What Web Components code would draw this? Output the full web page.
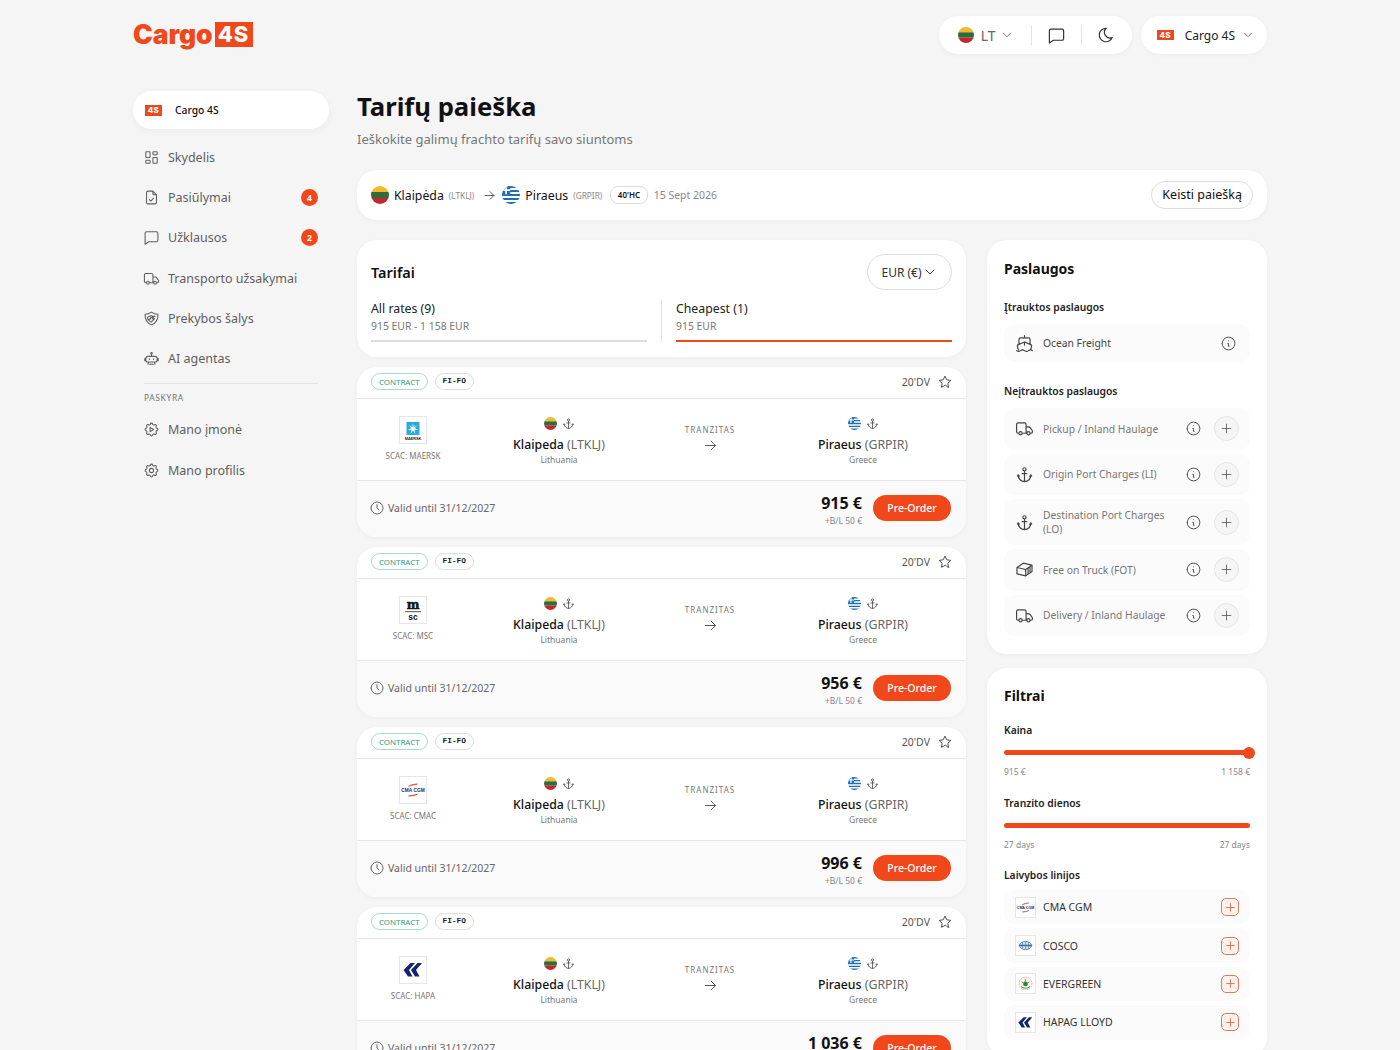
<!DOCTYPE html>
<html lang="lt">
<head>
<meta charset="utf-8">
<title>Cargo 4S</title>
<style>
  html, body { margin: 0; height: 1050px; overflow: hidden; background: #f5f5f5; }
  body { font-family: "Noto Sans", "Liberation Sans", sans-serif; color: #111; }
</style>
</head>
<body>
<app-page>
  <top-bar slot="header"></top-bar>
  <side-nav slot="side">
    <nav-item icon="dashboard" label="Skydelis"></nav-item>
    <nav-item icon="fileCheck" label="Pasiūlymai" badge="4"></nav-item>
    <nav-item icon="message" label="Užklausos" badge="2"></nav-item>
    <nav-item icon="truck" label="Transporto užsakymai"></nav-item>
    <nav-item icon="handshake" label="Prekybos šalys"></nav-item>
    <nav-item icon="robot" label="AI agentas"></nav-item>
    <nav-section label="PASKYRA"></nav-section>
    <nav-item icon="gearPlay" label="Mano įmonė"></nav-item>
    <nav-item icon="settings" label="Mano profilis"></nav-item>
  </side-nav>
  <page-title slot="title" heading="Tarifų paieška" sub="Ieškokite galimų frachto tarifų savo siuntoms"></page-title>
  <search-bar slot="title"></search-bar>
  <rates-tabs slot="rates"></rates-tabs>
  <rate-card slot="rates" logo="maersk" scac="MAERSK" price="915 €"></rate-card>
  <rate-card slot="rates" logo="msc" scac="MSC" price="956 €"></rate-card>
  <rate-card slot="rates" logo="cma" scac="CMAC" price="996 €"></rate-card>
  <rate-card slot="rates" logo="hapag" scac="HAPA" price="1 036 €"></rate-card>
  <services-panel slot="aside">
    <service-row icon="ship" label="Ocean Freight" included></service-row>
    <service-row slot="extra" icon="truck" label="Pickup / Inland Haulage"></service-row>
    <service-row slot="extra" icon="anchor" label="Origin Port Charges (LI)"></service-row>
    <service-row slot="extra" icon="anchor" label="Destination Port Charges (LO)"></service-row>
    <service-row slot="extra" icon="container" label="Free on Truck (FOT)"></service-row>
    <service-row slot="extra" icon="truck" label="Delivery / Inland Haulage"></service-row>
  </services-panel>
  <filters-panel slot="aside">
    <carrier-row logo="cma" label="CMA CGM"></carrier-row>
    <carrier-row logo="cosco" label="COSCO"></carrier-row>
    <carrier-row logo="evergreen" label="EVERGREEN"></carrier-row>
    <carrier-row logo="hapag" label="HAPAG LLOYD"></carrier-row>
  </filters-panel>
</app-page>

<script>
// Paths for the outline icons
const ICONS = {
  dashboard: 'M5 4h4a1 1 0 0 1 1 1v6a1 1 0 0 1-1 1H5a1 1 0 0 1-1-1V5a1 1 0 0 1 1-1zM5 16h4a1 1 0 0 1 1 1v2a1 1 0 0 1-1 1H5a1 1 0 0 1-1-1v-2a1 1 0 0 1 1-1zM15 12h4a1 1 0 0 1 1 1v6a1 1 0 0 1-1 1h-4a1 1 0 0 1-1-1v-6a1 1 0 0 1 1-1zM15 4h4a1 1 0 0 1 1 1v2a1 1 0 0 1-1 1h-4a1 1 0 0 1-1-1V5a1 1 0 0 1 1-1z',
  fileCheck: 'M14 3v4a1 1 0 0 0 1 1h4M17 21H7a2 2 0 0 1-2-2V5a2 2 0 0 1 2-2h7l5 5v11a2 2 0 0 1-2 2zM9 15l2 2l4-4',
  message: 'M3 6a2 2 0 0 1 2-2h14a2 2 0 0 1 2 2v10a2 2 0 0 1-2 2H8l-5 3.500z',
  truck: 'M5 18H4a2 2 0 0 1-2-2V7a2 2 0 0 1 2-2h8a2 2 0 0 1 2 2v11M10 18h5M14 10h3.500a2 2 0 0 1 1.600.8l2.400 3.200a2 2 0 0 1 .5 1.300V16a2 2 0 0 1-2 2h-.5M5 18a2 2 0 1 0 4 0a2 2 0 1 0-4 0M15 18a2 2 0 1 0 4 0a2 2 0 1 0-4 0',
  handshake: 'M3 6c3 0 6-1 9-3c3 2 6 3 9 3c.5 6-2 12-9 15C5 18 2.500 12 3 6zM7 10l4-2l3 1h3M7 10l-1 2l4 4l1.500 1l4.500-4.500l-3-3.500M10 11.500l2-1l3 3M9 14l1.500-1.500',
  robot: 'M7 9h10a3 3 0 0 1 3 3v2a3 3 0 0 1-3 3H7a3 3 0 0 1-3-3v-2a3 3 0 0 1 3-3zM12 9V6M12 3.500a1.200 1.200 0 1 0 0 2.400a1.200 1.200 0 0 0 0-2.400zM9 12.500v1M15 12.500v1M4 12H2.500v3H4M20 12h1.500v3H20M9 20h6M8 17l-1 3M16 17l1 3',
  gearPlay: 'M10.325 4.317c.426-1.756 2.924-1.756 3.350 0a1.724 1.724 0 0 0 2.573 1.066c1.543-.94 3.310.826 2.370 2.370a1.724 1.724 0 0 0 1.065 2.572c1.756.426 1.756 2.924 0 3.350a1.724 1.724 0 0 0-1.066 2.573c.94 1.543-.826 3.310-2.370 2.370a1.724 1.724 0 0 0-2.572 1.065c-.426 1.756-2.924 1.756-3.350 0a1.724 1.724 0 0 0-2.573-1.066c-1.543.94-3.310-.826-2.370-2.370a1.724 1.724 0 0 0-1.065-2.572c-1.756-.426-1.756-2.924 0-3.350a1.724 1.724 0 0 0 1.066-2.573c-.94-1.543.826-3.310 2.370-2.370c1 .608 2.296.07 2.572-1.065zM10 9l5 3l-5 3z',
  settings: 'M10.325 4.317c.426-1.756 2.924-1.756 3.350 0a1.724 1.724 0 0 0 2.573 1.066c1.543-.94 3.310.826 2.370 2.370a1.724 1.724 0 0 0 1.065 2.572c1.756.426 1.756 2.924 0 3.350a1.724 1.724 0 0 0-1.066 2.573c.94 1.543-.826 3.310-2.370 2.370a1.724 1.724 0 0 0-2.572 1.065c-.426 1.756-2.924 1.756-3.350 0a1.724 1.724 0 0 0-2.573-1.066c-1.543.94-3.310-.826-2.370-2.370a1.724 1.724 0 0 0-1.065-2.572c-1.756-.426-1.756-2.924 0-3.350a1.724 1.724 0 0 0 1.066-2.573c-.94-1.543.826-3.310 2.370-2.370c1 .608 2.296.07 2.572-1.065zM9 12a3 3 0 1 0 6 0a3 3 0 0 0-6 0',
  moon: 'M12 3c.132 0 .263 0 .393 0a7.500 7.500 0 0 0 7.920 12.446a9 9 0 1 1-8.313-12.454z',
  anchor: 'M12 8v13M9 11h6M4 13a8 8 0 0 0 16 0M21 14l-1-1.500l-1.500 1.500M5.500 14L4 12.500L3 14M10 5.500a2 2 0 1 0 4 0a2 2 0 1 0-4 0',
  star: 'M12 17.750l-6.172 3.245l1.179-6.873l-5-4.867l6.900-1l3.086-6.253l3.086 6.253l6.900 1l-5 4.867l1.179 6.873z',
  clock: 'M3 12a9 9 0 1 0 18 0a9 9 0 1 0-18 0M12 7v5l3 3',
  info: 'M3 12a9 9 0 1 0 18 0a9 9 0 1 0-18 0M12 8h.01M11 12h1v4h1',
  plus: 'M12 5v14M5 12h14',
  arrow: 'M5 12h14M13 18l6-6M13 6l6 6',
  chevron: 'M6 9l6 6l6-6',
  ship: 'M12 10.200V14M12 2v3M19 13V7a2 2 0 0 0-2-2H7a2 2 0 0 0-2 2v6M19.400 20A11.600 11.600 0 0 0 21 14l-8.200-3.600a2 2 0 0 0-1.600 0L3 14a11.600 11.600 0 0 0 1.600 6M2 21c.6.5 1.200 1 2.500 1c2.500 0 2.500-2 5-2c1.300 0 1.900.5 2.500 1s1.200 1 2.500 1c2.500 0 2.500-2 5-2c1.300 0 1.900.5 2.500 1',
  container: 'M2.500 9.500l8-5.500l11 2.500v8l-8 5.500l-11-2.500zM2.500 9.500l11 2.500v8M13.500 12l8-5.500M16.500 10v8M19 8.300v8'
};

// Returns the svg of an outline icon
const icono = (nombre, size, ancho = 1.7) =>
  `<svg width="${size}" height="${size}" viewBox="0 0 24 24" fill="none" stroke="currentColor" stroke-width="${ancho}" stroke-linecap="round" stroke-linejoin="round" style="display:block;flex:none"><path d="${ICONS[nombre]}"/></svg>`;

const banderaLT = size => `<svg width="${size}" height="${size}" viewBox="0 0 24 24" style="display:block;flex:none"><defs><clipPath id="c"><circle cx="12" cy="12" r="12"/></clipPath></defs><g clip-path="url(#c)"><rect width="24" height="8" fill="#f4b92c"/><rect y="8" width="24" height="8" fill="#2f6b3b"/><rect y="16" width="24" height="8" fill="#c1272d"/></g></svg>`;

const banderaGR = size => `<svg width="${size}" height="${size}" viewBox="0 0 24 24" style="display:block;flex:none"><defs><clipPath id="g"><circle cx="12" cy="12" r="12"/></clipPath></defs><g clip-path="url(#g)"><rect width="24" height="24" fill="#fff"/><path d="M0 1.300h24M0 6.700h24M0 12h24M0 17.300h24M0 22.700h24" stroke="#1f6fb5" stroke-width="2.700"/><rect width="11" height="11" fill="#1f6fb5"/><path d="M5.500 0v11M0 5.500h11" stroke="#fff" stroke-width="2.200"/></g></svg>`;

// Little red 4S mark, kept as real text
const marca4S = (w, h, fs) => `<span style="display:inline-flex;align-items:center;justify-content:center;flex:none;width:${w}px;height:${h}px;background:#f1481b;color:#fff;font:800 ${fs}px/1 Inter,sans-serif;letter-spacing:.3px">4S</span>`;

// Seven pointed star of the Maersk logo
const estrella = (cx, cy, r1, r2) => {
  const puntos = [];
  for (let i = 0; i < 14; i++) {
    const r = i % 2 ? r2 : r1;
    const a = -Math.PI / 2 + i * Math.PI / 7;
    puntos.push((cx + r * Math.cos(a)).toFixed(2) + ',' + (cy + r * Math.sin(a)).toFixed(2));
  }
  return puntos.join(' ');
};

// Carrier logos
const LOGOS = {
  maersk: `<svg width="28" height="28" viewBox="0 0 28 28"><rect x="7.500" y="6" width="13" height="13" fill="#2aa9dc"/><polygon points="${estrella(14, 12.7, 5.6, 1.7)}" fill="#fff"/><text x="14" y="23.500" text-anchor="middle" font-family="Liberation Sans" font-weight="700" font-size="3.800" fill="#222">MAERSK</text></svg>`,
  msc: `<svg width="28" height="28" viewBox="0 0 28 28"><path d="M6 15.700h16" stroke="#222" stroke-width=".8"/><text x="14" y="13" text-anchor="middle" font-family="DejaVu Serif" font-weight="700" font-size="12" fill="#111" stroke="#111" stroke-width=".5">m</text><text x="14" y="23.500" text-anchor="middle" font-family="Liberation Sans" font-weight="700" font-size="8.500" fill="#111">sc</text></svg>`,
  cma: `<svg width="28" height="28" viewBox="0 0 28 28"><path d="M9.500 10.500c2.500-1.800 6-2.500 9-2.500c-3 .7-6 1-9 2.500zM18.500 18c-2.500 1.800-6 2-9 2c3-.6 6-.8 9-2z" fill="#d8372e" stroke="#d8372e" stroke-width=".6"/><text x="14" y="15.700" text-anchor="middle" font-family="Liberation Sans" font-weight="700" font-size="4.800" fill="#1d2a5b">CMA CGM</text></svg>`,
  hapag: `<svg width="28" height="28" viewBox="0 0 28 28"><path d="M11.500 7h4.500l-6 7l3.500 6.500h-4.500l-4.500-6.500zM18.500 7h4.500l-6 7l3.500 6.500h-4.500l-4-6.500z" fill="#14246e"/></svg>`,
  cosco: `<svg width="28" height="28" viewBox="0 0 28 28"><ellipse cx="14" cy="14" rx="8" ry="5.500" fill="#cfdcec" stroke="#3f6ea5" stroke-width="1"/><path d="M5 14h18" stroke="#3f6ea5" stroke-width="2"/><path d="M10 9.500v9M14 8.500v11M18 9.500v9" stroke="#3f6ea5" stroke-width=".6"/></svg>`,
  evergreen: `<svg width="28" height="28" viewBox="0 0 28 28"><circle cx="14" cy="14" r="8.500" fill="#fdf6ec" stroke="#e2a58e" stroke-width="1.200" stroke-dasharray="2 1"/><circle cx="14" cy="14.500" r="3.200" fill="#1f8a3d"/><path d="M8 18c3 3 9 3 12 0" stroke="#1f8a3d" stroke-width="1.200" fill="none"/><path d="M14 8v3M9 12l2 1M19 12l-2 1" stroke="#1f8a3d" stroke-width="1"/></svg>`
};

// Page frame with the header, the side column and the two content columns
class AppPage extends HTMLElement {
  constructor() {
    super();
    this.attachShadow({ mode: 'open' });
    this.shadowRoot.innerHTML = `
      <style>
        :host { display: block; width: 1134px; margin: 0 auto; padding-top: 16px; }
        .cuerpo { display: grid; grid-template-columns: 196px 910px; column-gap: 28px; margin-top: 37px; }
        .contenido { display: grid; grid-template-columns: 609px 280px; column-gap: 21px; margin-top: 20px; }
        .col { display: flex; flex-direction: column; gap: 10.100px; }
        .col2 { display: flex; flex-direction: column; gap: 14px; }
      </style>
      <slot name="header"></slot>
      <div class="cuerpo">
        <slot name="side"></slot>
        <div>
          <slot name="title"></slot>
          <div class="contenido">
            <div class="col"><slot name="rates"></slot></div>
            <div class="col2"><slot name="aside"></slot></div>
          </div>
        </div>
      </div>`;
  }
}
customElements.define('app-page', AppPage);

// Header with the logo and the rounded controls
class TopBar extends HTMLElement {
  constructor() {
    super();
    this.attachShadow({ mode: 'open' });
    this.shadowRoot.innerHTML = `
      <style>
        :host { display: flex; align-items: center; justify-content: space-between; height: 38px; font-size: 13px; }
        .logo { display: flex; align-items: center; margin-top: -2px; color: #f1481b; font: 900 26.500px/1 Inter, sans-serif; letter-spacing: -.1px; }
        .logo b { display: flex; align-items: center; justify-content: center; width: 38px; height: 25px; margin-left: 2px; background: #f1481b; color: #fff; font-weight: 800; font-size: 22px; letter-spacing: 1px; }
        .derecha { display: flex; gap: 9px; }
        .pill { display: flex; align-items: center; height: 38px; background: #fff; border-radius: 19px; box-shadow: 0 1px 5px rgba(0,0,0,.04); }
        .idioma { padding-left: 19px; width: 193px; box-sizing: border-box; }
        .lt { margin-left: 7px; color: #666; font-size: 14px; }
        .chev { color: #777; margin-left: 5px; }
        .sep { flex: none; width: 1px; height: 20px; background: #e3e3e3; }
        .icono { color: #333; }
        .cuenta { padding: 0 12px 0 16px; }
        .cuenta span.t { margin-left: 11px; font-size: 12px; color: #222; }
      </style>
      <div class="logo">Cargo<b>4S</b></div>
      <div class="derecha">
        <div class="pill idioma">
          ${banderaLT(16)}<span class="lt">LT</span><span class="chev">${icono('chevron', 14)}</span>
          <span class="sep" style="margin-left:17px"></span>
          <span class="icono" style="margin-left:14.500px">${icono('message', 19, 1.5)}</span>
          <span class="sep" style="margin-left:15.500px"></span>
          <span class="icono" style="margin-left:15px">${icono('moon', 18, 1.6)}</span>
        </div>
        <div class="pill cuenta">
          ${marca4S(17, 10, 8)}<span class="t">Cargo 4S</span><span class="chev" style="margin-left:6px">${icono('chevron', 14)}</span>
        </div>
      </div>`;
  }
}
customElements.define('top-bar', TopBar);

// Side menu column
class SideNav extends HTMLElement {
  constructor() {
    super();
    this.attachShadow({ mode: 'open' });
    this.shadowRoot.innerHTML = `
      <style>
        :host { display: block; }
        .activo { display: flex; align-items: center; height: 38px; padding: 0 12px; background: #fff; border-radius: 19px; box-shadow: 0 2px 8px rgba(0,0,0,.04); font-size: 10.300px; font-weight: 500; color: #111; margin-bottom: 8px; }
        .activo .t { margin-left: 13px; }
      </style>
      <div class="activo">${marca4S(17, 11, 8)}<span class="t">Cargo 4S</span></div>
      <slot></slot>`;
  }
}
customElements.define('side-nav', SideNav);

class NavItem extends HTMLElement {
  constructor() {
    super();
    this.attachShadow({ mode: 'open' });
    const badge = this.getAttribute('badge');
    this.shadowRoot.innerHTML = `
      <style>
        :host { display: flex; align-items: center; height: 40.300px; padding: 0 11px 0 10px; color: #5f5f5f; font-size: 12.500px; }
        .txt { margin-left: 8px; flex: 1; }
        .badge { display: flex; align-items: center; justify-content: center; width: 17px; height: 17px; border-radius: 50%; background: #f1481b; color: #fff; font-size: 8.500px; font-weight: 700; }
      </style>
      ${icono(this.getAttribute('icon'), 17, 1.5)}
      <span class="txt">${this.getAttribute('label')}</span>
      ${badge ? `<span class="badge">${badge}</span>` : ''}`;
  }
}
customElements.define('nav-item', NavItem);

class NavSection extends HTMLElement {
  constructor() {
    super();
    this.attachShadow({ mode: 'open' });
    this.shadowRoot.innerHTML = `
      <style>
        :host { display: block; margin: 4px 11px 0; border-top: 1px solid #e2e2e2; padding: 8px 0 6px; color: #777; font-size: 8.500px; letter-spacing: .6px; line-height: 12px; }
      </style>
      ${this.getAttribute('label')}`;
  }
}
customElements.define('nav-section', NavSection);

class PageTitle extends HTMLElement {
  constructor() {
    super();
    this.attachShadow({ mode: 'open' });
    this.shadowRoot.innerHTML = `
      <style>
        :host { display: block; }
        h1 { margin: 0; font-size: 25.700px; font-weight: 700; line-height: 32px; color: #111; }
        p { margin: 6px 0 0; font-size: 13px; line-height: 20px; color: #777; }
      </style>
      <h1>${this.getAttribute('heading')}</h1>
      <p>${this.getAttribute('sub')}</p>`;
  }
}
customElements.define('page-title', PageTitle);

// Summary of the route being searched
class SearchBar extends HTMLElement {
  constructor() {
    super();
    this.attachShadow({ mode: 'open' });
    this.shadowRoot.innerHTML = `
      <style>
        :host { display: flex; align-items: center; height: 50px; margin-top: 21px; padding: 0 14px; background: #fff; border-radius: 20px; box-shadow: 0 1px 5px rgba(0,0,0,.04); font-size: 12.300px; color: #111; }
        .cod { margin-left: 5px; font-size: 8.300px; color: #888; }
        .nom { margin-left: 5px; }
        .flecha { color: #555; margin: 0 5px 0 8px; }
        .tipo { margin-left: 8px; padding: 0 6.500px; height: 16px; line-height: 15px; border: 1px solid #ddd; border-radius: 8px; font-size: 8px; font-weight: 600; }
        .fecha { margin-left: 6px; font-size: 10.500px; color: #888; flex: 1; }
        .btn { padding: 0 10px; height: 28px; line-height: 26px; box-sizing: border-box; border: 1px solid #ddd; border-radius: 14px; font-size: 12.500px; }
      </style>
      ${banderaLT(18)}<span class="nom">Klaipėda</span><span class="cod">(LTKLJ)</span>
      <span class="flecha">${icono('arrow', 15, 1.5)}</span>
      ${banderaGR(18)}<span class="nom">Piraeus</span><span class="cod">(GRPIR)</span>
      <span class="tipo">40'HC</span>
      <span class="fecha">15 Sept 2026</span>
      <span class="btn">Keisti paiešką</span>`;
  }
}
customElements.define('search-bar', SearchBar);

// Panel with the title, the currency and the two tabs
class RatesTabs extends HTMLElement {
  constructor() {
    super();
    this.attachShadow({ mode: 'open' });
    this.shadowRoot.innerHTML = `
      <style>
        :host { display: block; height: 117px; box-sizing: border-box; padding: 14px 14px 0; background: #fff; border-radius: 20px; box-shadow: 0 1px 5px rgba(0,0,0,.04); }
        .arriba { display: flex; align-items: center; justify-content: space-between; height: 36px; }
        h2 { margin: 0; font-size: 14.500px; font-weight: 600; color: #111; }
        .moneda { display: flex; align-items: center; justify-content: center; width: 85px; height: 36px; box-sizing: border-box; border: 1px solid #ddd; border-radius: 18px; font-size: 12px; color: #333; }
        .tabs { display: grid; grid-template-columns: 1fr 1px 1fr; column-gap: 14px; margin-top: 10px; }
        .tab { height: 42px; border-bottom: 2px solid #ddd; font-size: 12.300px; line-height: 18px; color: #222; box-sizing: border-box; }
        .tab small { display: block; font-size: 10.400px; line-height: 16px; color: #777; }
        .tab.on { border-color: #f1481b; }
        .vr { background: #e3e3e3; height: 42px; }
      </style>
      <div class="arriba"><h2>Tarifai</h2><div class="moneda">EUR (€)${icono('chevron', 16, 1.5)}</div></div>
      <div class="tabs">
        <div class="tab">All rates (9)<small>915 EUR - 1 158 EUR</small></div>
        <div class="vr"></div>
        <div class="tab on">Cheapest (1)<small>915 EUR</small></div>
      </div>`;
  }
}
customElements.define('rates-tabs', RatesTabs);

// One freight rate
class RateCard extends HTMLElement {
  constructor() {
    super();
    this.attachShadow({ mode: 'open' });
    this.shadowRoot.innerHTML = `
      <style>
        :host { display: block; flex: none; height: 170px; background: #fff; border-radius: 20px; overflow: hidden; box-shadow: 0 1px 5px rgba(0,0,0,.04); }
        .cab { display: flex; align-items: center; gap: 7px; height: 32px; box-sizing: border-box; padding: 0 14px 2px; border-bottom: 1px solid #e6e6e6; }
        .tag { height: 17px; line-height: 16px; padding: 0 7px; border-radius: 9px; box-sizing: border-box; }
        .contrato { border: 1px solid #a9d8cc; color: #2c9a80; font-size: 7.900px; }
        .term { border: 1px solid #ddd; color: #222; font: 700 7.800px/15px "Liberation Mono", monospace; }
        .cont { margin-left: auto; font-size: 10.500px; color: #555; margin-right: 1px; }
        .star { color: #444; }
        .medio { display: grid; grid-template-columns: 112px repeat(3, 1fr); height: 82px; padding: 0 27px 0 14px; border-bottom: 1px solid #e6e6e6; box-sizing: border-box; }
        .carrier { width: 84px; display: flex; flex-direction: column; align-items: center; padding-top: 17px; }
        .caja { width: 28px; height: 28px; box-sizing: border-box; border: 1px solid #e6e6e6; display: flex; align-items: center; justify-content: center; overflow: hidden; }
        .caja svg { flex: none; display: block; margin: -1px; }
        .scac { margin-top: 6px; font-size: 8px; color: #777; white-space: nowrap; }
        .punto { display: flex; flex-direction: column; align-items: center; padding-top: 17px; }
        .iconos { display: flex; align-items: center; gap: 5px; height: 14px; color: #555; }
        .nom { margin-top: 6px; font-size: 12.300px; line-height: 18px; font-weight: 500; color: #111; white-space: nowrap; }
        .nom span { font-weight: 400; color: #666; }
        .pais { font-size: 8.500px; line-height: 12px; color: #777; }
        .transito { display: flex; flex-direction: column; align-items: center; padding: 25px 2px 0 0; color: #555; }
        .transito span { font-size: 8px; letter-spacing: 1px; color: #777; margin-bottom: 2px; line-height: 11px; }
        .pie { display: flex; align-items: center; height: 56px; box-sizing: border-box; padding: 0 15px 2px 12px; background: #fafafa; font-size: 10.500px; color: #666; }
        .pie .val { margin-left: 3px; flex: 1; }
        .precio { display: flex; flex-direction: column; align-items: flex-end; margin: 4px 11px 0 0; }
        .precio b { font-size: 16px; line-height: 20px; color: #111; font-weight: 700; }
        .precio small { font-size: 8.500px; line-height: 12px; color: #888; margin-top: 2px; }
        .pedir { display: flex; align-items: center; justify-content: center; width: 78px; height: 26px; border-radius: 13px; background: #f1481b; color: #fff; font-size: 10.500px; font-weight: 500; }
      </style>
      <div class="cab">
        <span class="tag contrato">CONTRACT</span><span class="tag term">FI-FO</span>
        <span class="cont">20'DV</span><span class="star">${icono('star', 14, 1.6)}</span>
      </div>
      <div class="medio">
        <div class="carrier"><div class="caja">${LOGOS[this.getAttribute('logo')]}</div><div class="scac">SCAC: ${this.getAttribute('scac')}</div></div>
        <div class="punto"><div class="iconos">${banderaLT(13)}${icono('anchor', 13, 1.6)}</div><div class="nom">Klaipeda <span>(LTKLJ)</span></div><div class="pais">Lithuania</div></div>
        <div class="transito"><span>TRANZITAS</span>${icono('arrow', 17, 1.4)}</div>
        <div class="punto"><div class="iconos">${banderaGR(13)}${icono('anchor', 13, 1.6)}</div><div class="nom">Piraeus <span>(GRPIR)</span></div><div class="pais">Greece</div></div>
      </div>
      <div class="pie">
        ${icono('clock', 16, 1.5)}<span class="val">Valid until 31/12/2027</span>
        <div class="precio"><b>${this.getAttribute('price')}</b><small>+B/L 50 €</small></div>
        <div class="pedir">Pre-Order</div>
      </div>`;
  }
}
customElements.define('rate-card', RateCard);

// Right column: services
class ServicesPanel extends HTMLElement {
  constructor() {
    super();
    this.attachShadow({ mode: 'open' });
    this.shadowRoot.innerHTML = `
      <style>
        :host { display: block; height: 414px; box-sizing: border-box; padding: 17px 17px 0; background: #fff; border-radius: 20px; box-shadow: 0 1px 5px rgba(0,0,0,.04); }
        h2 { margin: 0; font-size: 14px; line-height: 24px; font-weight: 700; color: #111; }
        h3 { margin: 18px 0 9px; font-size: 10.300px; line-height: 16px; font-weight: 600; color: #222; }
        h3.b { margin-top: 21px; }
        .lista { display: flex; flex-direction: column; gap: 4px; }
      </style>
      <h2>Paslaugos</h2>
      <h3>Įtrauktos paslaugos</h3>
      <div class="lista"><slot></slot></div>
      <h3 class="b">Neįtrauktos paslaugos</h3>
      <div class="lista"><slot name="extra"></slot></div>`;
  }
}
customElements.define('services-panel', ServicesPanel);

class ServiceRow extends HTMLElement {
  constructor() {
    super();
    this.attachShadow({ mode: 'open' });
    const incluida = this.hasAttribute('included');
    this.shadowRoot.innerHTML = `
      <style>
        :host { display: flex; align-items: center; min-height: 41.500px; box-sizing: border-box; padding: 0 11px; background: #fbfbfb; border-radius: 10px; font-size: 10.300px; line-height: 14px; color: ${incluida ? '#444' : '#777'}; }
        :host([included]) { min-height: 38px; padding-right: 13px; }
        .ic { color: #444; margin-right: 9px; }
        .txt { flex: 1; padding: 9px 8px 9px 0; }
        .info { color: #444; }
        .mas { display: flex; align-items: center; justify-content: center; width: 25px; height: 25px; box-sizing: border-box; margin-left: 12px; border-radius: 50%; background: #f5f5f5; border: 1px solid #e5e5e5; color: #555; }
      </style>
      <span class="ic">${icono(this.getAttribute('icon'), 19, 1.5)}</span>
      <span class="txt">${this.getAttribute('label')}</span>
      <span class="info">${icono('info', 17, 1.3)}</span>
      ${incluida ? '' : `<span class="mas">${icono('plus', 15, 1.3)}</span>`}`;
  }
}
customElements.define('service-row', ServiceRow);

// Right column: filters
class FiltersPanel extends HTMLElement {
  constructor() {
    super();
    this.attachShadow({ mode: 'open' });
    this.shadowRoot.innerHTML = `
      <style>
        :host { display: block; box-sizing: border-box; padding: 16px 17px 17px; background: #fff; border-radius: 20px; box-shadow: 0 1px 5px rgba(0,0,0,.04); }
        h2 { margin: 0; font-size: 14px; line-height: 24px; font-weight: 700; color: #111; }
        h3 { margin: 0; font-size: 10.300px; line-height: 16px; font-weight: 600; color: #222; }
        .barra { position: relative; height: 5px; margin-top: 12px; border-radius: 3px; background: #f1481b; }
        .tirador { position: absolute; right: -5px; top: -3.500px; width: 12px; height: 12px; border-radius: 50%; background: #f1481b; }
        .vals { display: flex; justify-content: space-between; margin-top: 11px; font-size: 8.500px; line-height: 12px; color: #888; margin-bottom: 16px; }
        .vals.uno { margin-bottom: 17px; }
        .lista { display: flex; flex-direction: column; gap: 4px; margin-top: 7px; }
      </style>
      <h2>Filtrai</h2>
      <h3 style="margin-top:14px">Kaina</h3>
      <div class="barra"><span class="tirador"></span></div>
      <div class="vals uno"><span>915 €</span><span>1 158 €</span></div>
      <h3>Tranzito dienos</h3>
      <div class="barra"></div>
      <div class="vals"><span>27 days</span><span>27 days</span></div>
      <h3>Laivybos linijos</h3>
      <div class="lista"><slot></slot></div>`;
  }
}
customElements.define('filters-panel', FiltersPanel);

class CarrierRow extends HTMLElement {
  constructor() {
    super();
    this.attachShadow({ mode: 'open' });
    this.shadowRoot.innerHTML = `
      <style>
        :host { display: flex; align-items: center; height: 34.400px; padding: 0 11px; background: #fbfbfb; border-radius: 10px; font-size: 10.500px; color: #333; }
        .caja { width: 21px; height: 21px; box-sizing: border-box; border: 1px solid #e6e6e6; background: #fff; display: flex; align-items: center; justify-content: center; overflow: hidden; }
        .caja svg { width: 21px; height: 21px; flex: none; }
        .txt { margin-left: 7px; flex: 1; }
        .mas { display: flex; align-items: center; justify-content: center; width: 18px; height: 18px; box-sizing: border-box; border: 1px solid #df7b5f; border-radius: 5px; background: #fdf1ed; color: #d8613f; }
      </style>
      <span class="caja">${LOGOS[this.getAttribute('logo')]}</span>
      <span class="txt">${this.getAttribute('label')}</span>
      <span class="mas">${icono('plus', 13, 1.5)}</span>`;
  }
}
customElements.define('carrier-row', CarrierRow);
</script>
</body>
</html>
